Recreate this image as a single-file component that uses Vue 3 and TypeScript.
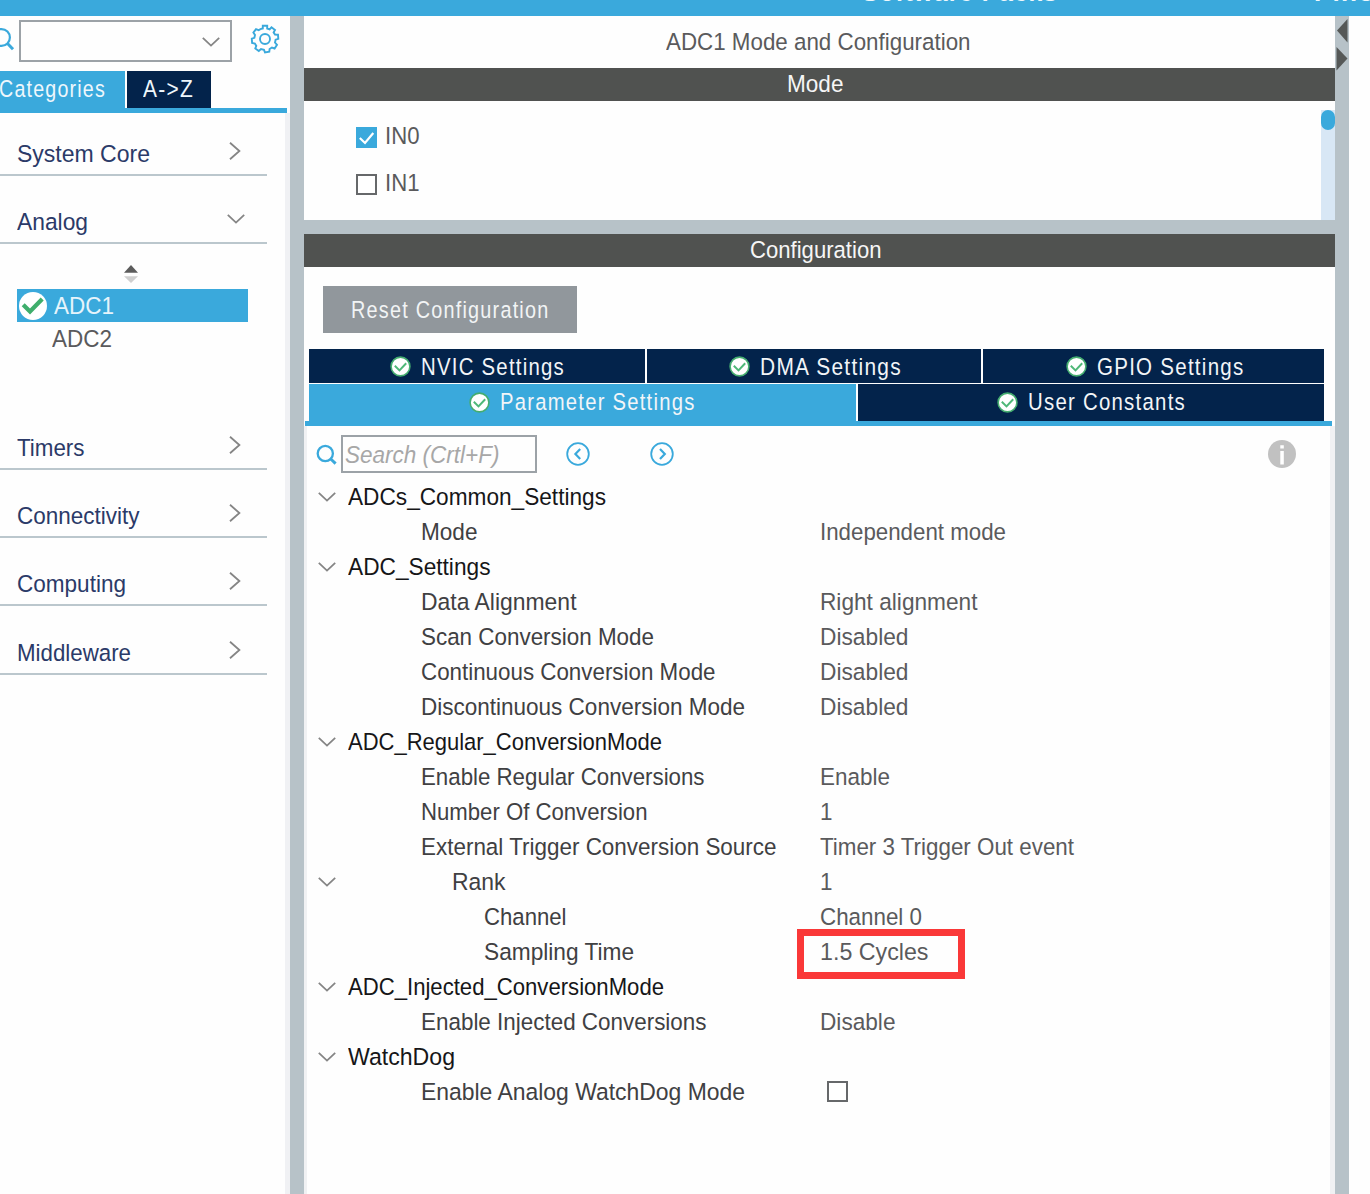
<script setup lang="ts">
import type { Directive } from 'vue'

interface Row {
  label: string
  w: number
  level: 'group' | 'item' | 'sub' | 'leaf'
  open?: boolean
  value?: string
  vw?: number
  check?: boolean
  marked?: boolean
}

interface Tab {
  label: string
  w: number
  pad: number
  width: number
  active?: boolean
}

// Condenses a label horizontally so that it takes the given width.
const vFit: Directive<HTMLElement, number> = {
  mounted(el, { value }) {
    const natural = el.getBoundingClientRect().width
    el.style.transform = `scaleX(${value / natural})`
    el.style.marginRight = `${value - natural}px`
  },
}

const before = [
  { label: 'System Core', w: 133, open: false },
  { label: 'Analog', w: 71, open: true },
]
const after = [
  { label: 'Timers', w: 67.5 },
  { label: 'Connectivity', w: 122.5 },
  { label: 'Computing', w: 109 },
  { label: 'Middleware', w: 114 },
]

const tabRows: Tab[][] = [
  [
    { label: 'NVIC Settings', w: 144, pad: 81, width: 336 },
    { label: 'DMA Settings', w: 142, pad: 82, width: 334 },
    { label: 'GPIO Settings', w: 147.5, pad: 82.5, width: 341 },
  ],
  [
    { label: 'Parameter Settings', w: 195.5, pad: 159.5, width: 546.5, active: true },
    { label: 'User Constants', w: 158, pad: 139, width: 466.5 },
  ],
]

const rows: Row[] = [
  { label: 'ADCs_Common_Settings', w: 258, level: 'group', open: true },
  { label: 'Mode', w: 56.5, level: 'item', value: 'Independent mode', vw: 186 },
  { label: 'ADC_Settings', w: 142.5, level: 'group', open: true },
  { label: 'Data Alignment', w: 155.5, level: 'item', value: 'Right alignment', vw: 157.5 },
  { label: 'Scan Conversion Mode', w: 233, level: 'item', value: 'Disabled', vw: 88.5 },
  { label: 'Continuous Conversion Mode', w: 294.5, level: 'item', value: 'Disabled', vw: 88.5 },
  { label: 'Discontinuous Conversion Mode', w: 324, level: 'item', value: 'Disabled', vw: 88.5 },
  { label: 'ADC_Regular_ConversionMode', w: 314, level: 'group', open: true },
  { label: 'Enable Regular Conversions', w: 283.5, level: 'item', value: 'Enable', vw: 70 },
  { label: 'Number Of Conversion', w: 226.5, level: 'item', value: '1', vw: 12.5 },
  { label: 'External Trigger Conversion Source', w: 355.5, level: 'item', value: 'Timer 3 Trigger Out event', vw: 254 },
  { label: 'Rank', w: 53.5, level: 'sub', open: true, value: '1', vw: 12.5 },
  { label: 'Channel', w: 82.5, level: 'leaf', value: 'Channel 0', vw: 102 },
  { label: 'Sampling Time', w: 150, level: 'leaf', value: '1.5 Cycles', vw: 108.5, marked: true },
  { label: 'ADC_Injected_ConversionMode', w: 316, level: 'group', open: true },
  { label: 'Enable Injected Conversions', w: 285.5, level: 'item', value: 'Disable', vw: 75.5 },
  { label: 'WatchDog', w: 107, level: 'group', open: true },
  { label: 'Enable Analog WatchDog Mode', w: 324, level: 'item', check: true },
]
</script>

<template>
  <div class="app">
    <header class="topbar">
      <span class="top-item packs"><span v-fit="196" class="t">Software Packs</span></span>
      <span class="top-item pinout"><span v-fit="88" class="t">Pinout</span></span>
    </header>

    <div class="body">
      <aside class="sidebar">
        <div class="finder">
          <svg class="find-icon" width="15" height="28" viewBox="0 0 15 28">
            <circle cx="1.5" cy="10.5" r="8.4" />
            <path d="M7.5 16.5L13 22.3" stroke-width="3" />
          </svg>
          <div class="combo">
            <svg width="18" height="10" viewBox="0 0 18 10" class="chev"><path d="M.8 .8L9 8.6L17.2 .8" /></svg>
          </div>
          <svg class="gear" width="30" height="30" viewBox="-15 -15 30 30">
            <path
              d="M-2.2 -10.5L-2.2 -13.3H2.2L2.2 -10.5L4.6 -9.6L6.5 -11.7L10 -9L8.6 -6.6L10 -4.5L13 -4.3L13.3 -.2L10.6 .7L10 3.6L12 5.9L9.6 9.5L6.9 8.5L4.6 10L4.3 12.8L0 13.5L-1 10.8L-4 10.1L-6.2 12L-9.7 9.5L-8.7 6.9L-10.1 4.5L-12.9 4L-13.2 -.4L-10.6 -1.2L-10 -4L-11.6 -6.4L-9 -9.8L-6.4 -8.8L-4.6 -9.9Z"
            />
            <circle r="5" />
          </svg>
        </div>
        <div class="side-tabs">
          <div class="side-tab on"><span v-fit="107" class="t">Categories</span></div>
          <div class="side-tab az"><span v-fit="51" class="t">A-&gt;Z</span></div>
        </div>
        <div class="side-rule"></div>
        <div class="side-list">
          <div v-for="c in before" :key="c.label" class="cat">
            <span v-fit="c.w" class="t">{{ c.label }}</span>
            <svg v-if="c.open" width="18" height="10" viewBox="0 0 18 10" class="chev cat-down"><path d="M.8 .8L9 8.6L17.2 .8" /></svg>
            <svg v-else width="12" height="18" viewBox="0 0 12 18" class="chev cat-right"><path d="M1 .8L10.4 9L1 17.2" /></svg>
          </div>
          <div class="devices">
            <svg class="sorter" width="16" height="20" viewBox="0 0 16 20">
              <path d="M8 1L15 8.8H1Z" fill="#5c5c5c" />
              <path d="M1 12.2H15L8 19Z" fill="#cfcfcf" />
            </svg>
            <div class="device picked">
              <svg width="28" height="28" viewBox="0 0 28 28">
                <circle cx="14" cy="14" r="14" fill="#fff" />
                <path d="M4.2 12.7L11 19.5L23.2 7" fill="none" stroke="#3fae6c" stroke-width="4.2" />
              </svg>
              <span v-fit="60" class="t">ADC1</span>
            </div>
            <div class="device plain"><span v-fit="60" class="t">ADC2</span></div>
          </div>
          <div v-for="c in after" :key="c.label" class="cat">
            <span v-fit="c.w" class="t">{{ c.label }}</span>
            <svg width="12" height="18" viewBox="0 0 12 18" class="chev cat-right"><path d="M1 .8L10.4 9L1 17.2" /></svg>
          </div>
        </div>
      </aside>

      <div class="rail left"></div>

      <main class="main">
        <div class="title"><span v-fit="304.5" class="t">ADC1 Mode and Configuration</span></div>
        <div class="bar"><span v-fit="56.5" class="t">Mode</span></div>
        <section class="mode">
          <div class="inputs">
            <label class="input-row">
              <svg width="21" height="21" viewBox="0 0 21 21">
                <path d="M0 0H21V21H0Z" fill="#3aa9dc" />
                <path d="M3.8 11L9 16L17.3 6" fill="none" stroke="#fff" stroke-width="2.2" />
              </svg>
              <span v-fit="34.5" class="t">IN0</span>
            </label>
            <label class="input-row">
              <span class="box"></span>
              <span v-fit="34.5" class="t">IN1</span>
            </label>
          </div>
          <div class="track"><div class="thumb"></div></div>
        </section>
        <div class="split"></div>
        <div class="bar conf"><span v-fit="131.5" class="t">Configuration</span></div>
        <section class="config">
          <button class="reset"><span v-fit="198.5" class="t">Reset Configuration</span></button>
          <div class="tabs">
            <div v-for="(line, i) in tabRows" :key="i" class="tab-line" :class="{ second: i === 1 }">
              <div
                v-for="tab in line"
                :key="tab.label"
                class="tab"
                :class="{ active: tab.active }"
                :style="{ width: tab.width + 'px', paddingLeft: tab.pad + 'px' }"
              >
                <svg width="21" height="21" viewBox="0 0 21 21">
                  <circle cx="10.5" cy="10.5" r="9.4" fill="#fff" stroke="#45ad70" stroke-width="1.6" />
                  <path d="M4.8 9.8L9.5 14.4L16.2 7.2" fill="none" stroke="#4fb878" stroke-width="2" />
                </svg>
                <span v-fit="tab.w" class="t">{{ tab.label }}</span>
              </div>
            </div>
          </div>
          <div class="tab-rule"></div>
          <div class="panel">
            <div class="tools">
              <svg class="search" width="22" height="22" viewBox="0 0 22 22">
                <circle cx="9.3" cy="9.5" r="7.6" />
                <path d="M14.8 15L19.6 19.6" stroke-width="3" />
              </svg>
              <div class="query"><span v-fit="154.5" class="t">Search (Crtl+F)</span></div>
              <svg class="nav prev" width="24" height="24" viewBox="0 0 24 24">
                <circle cx="12" cy="12" r="10.8" />
                <path d="M14.2 7L9.4 12L14.2 17" stroke-width="2.2" />
              </svg>
              <svg class="nav" width="24" height="24" viewBox="0 0 24 24">
                <circle cx="12" cy="12" r="10.8" />
                <path d="M10 7L14.8 12L10 17" stroke-width="2.2" />
              </svg>
              <svg class="info" width="28" height="28" viewBox="0 0 28 28">
                <circle cx="14" cy="14" r="14" fill="#c1c1c1" />
                <path d="M12.3 5.2H15.8V8.6H12.3ZM12.3 11H15.8V24.5H12.3Z" fill="#fff" />
              </svg>
            </div>
            <div class="tree">
              <div v-for="row in rows" :key="row.label" class="row" :class="row.level">
                <div class="toggle">
                  <svg v-if="row.open" width="18" height="10" viewBox="0 0 18 10" class="chev"><path d="M.8 .8L9 8.6L17.2 .8" /></svg>
                </div>
                <div class="name"><span v-fit="row.w" class="t">{{ row.label }}</span></div>
                <div class="value" :class="{ marked: row.marked }">
                  <span v-if="row.value" v-fit="row.vw ?? 0" class="t">{{ row.value }}</span>
                  <span v-if="row.check" class="box"></span>
                </div>
              </div>
            </div>
          </div>
        </section>
      </main>

      <div class="rail right">
        <svg width="13" height="56" viewBox="0 0 13 56">
          <path d="M12.5 3V26.5L2 14.5Z" fill="#555857" />
          <path d="M1.5 31V54.5L12.5 42.5Z" fill="#555857" />
        </svg>
      </div>
    </div>
  </div>
</template>

<style>
body {
  margin: 0;
  background: #fff;
  overflow: hidden;
}
</style>

<style scoped>
.app {
  width: 1370px;
  height: 1194px;
  overflow: hidden;
  background: #fefefe;
  font-family: 'Liberation Sans', Arial, sans-serif;
  font-size: 24.5px;
  color: #5a5a5c;
}
.app *,
.app *::after {
  box-sizing: border-box;
}
svg {
  display: block;
  flex: none;
}
.t {
  display: inline-block;
  flex: none;
  white-space: pre;
  transform-origin: 0 50%;
}
.topbar {
  height: 16px;
  background: #3aa9dc;
  overflow: hidden;
  display: flex;
  color: #eef8fd;
  font-weight: bold;
  letter-spacing: 1px;
}
.top-item {
  flex: none;
  height: 28px;
  line-height: 28px;
  margin-top: -21.5px;
}
.packs {
  margin-left: 862px;
  width: 452px;
}
.body {
  display: flex;
  height: 1178px;
}
.sidebar {
  width: 290px;
  flex: none;
}
.finder {
  display: flex;
  height: 55px;
  padding-top: 4px;
}
.find-icon,
.gear,
.search,
.nav {
  fill: none;
  stroke: #3aa9dc;
  stroke-width: 2;
}
.find-icon {
  margin: 7px 4px 0 0;
  stroke-width: 2.2;
}
.combo {
  width: 213px;
  height: 42px;
  border: 2px solid #9ca2a7;
  display: flex;
  align-items: center;
  justify-content: flex-end;
  padding: 1px 10px 0 0;
}
.gear {
  margin: 4px 0 0 18px;
  stroke-width: 1.9;
}
.chev {
  fill: none;
  stroke: #858585;
  stroke-width: 1.8;
}
.side-tabs {
  display: flex;
  gap: 2px;
  height: 36.5px;
  color: #eef7fc;
  letter-spacing: 1.5px;
}
.side-tab {
  line-height: 36px;
  height: 37px;
}
.side-tab.on {
  width: 125px;
  background: #3aa9dc;
}
.side-tab.on .t {
  margin-left: -1px;
}
.side-tab.az {
  width: 84px;
  padding-left: 15.5px;
  background: #03234b;
}
.side-rule {
  height: 5px;
  width: 287px;
  background: #3aa9dc;
}
.side-list {
  height: 1082px;
  border-right: 5px solid #f0f1f4;
}
.cat {
  width: 267px;
  height: 68.2px;
  border-bottom: 2px solid #bbc7cd;
  display: flex;
  align-items: flex-end;
  padding-left: 16.5px;
  color: #2b3a68;
}
.cat:first-child {
  height: 63.5px;
}
.cat .t {
  line-height: 28px;
  margin-bottom: 6px;
}
.chev.cat-right {
  margin: 0 26px 14px auto;
}
.chev.cat-down {
  margin: 0 22.5px 18.5px auto;
}
.devices {
  height: 157.6px;
  padding: 20px 0 0 17px;
}
.sorter {
  margin: 0 0 5px 106px;
}
.device {
  height: 33px;
  line-height: 33px;
  display: flex;
  align-items: center;
}
.picked {
  width: 231px;
  padding-left: 1.5px;
  gap: 7px;
  background: #3aa9dc;
  color: #e6f4fb;
}
.plain {
  padding-left: 35px;
}
.rail {
  flex: none;
  background: #b7c2c8;
}
.rail.left {
  width: 14px;
}
.rail.right {
  width: 13.5px;
}
.main {
  width: 1031px;
  flex: none;
}
.title {
  height: 51.5px;
  line-height: 51px;
  padding-left: 362px;
}
.bar {
  height: 33px;
  line-height: 32px;
  padding-left: 482.5px;
  background: #505250;
  color: #f6f6f6;
}
.bar.conf {
  padding-left: 446px;
}
.mode {
  height: 119px;
  display: flex;
  justify-content: space-between;
}
.inputs {
  padding: 13.5px 0 0 52px;
}
.input-row {
  display: flex;
  align-items: center;
  gap: 8px;
  height: 47px;
}
.input-row .t {
  margin-top: -3px;
}
.box {
  display: block;
  width: 21px;
  height: 21px;
  border: 2px solid #66686a;
  background: #fff;
}
.track {
  width: 14px;
  height: 110px;
  margin-top: 9px;
  background: #d8e7f5;
}
.thumb {
  height: 20px;
  border-radius: 7px;
  background: #3aa9dc;
}
.split {
  height: 14px;
  background: #b7c2c8;
}
.config {
  padding-top: 19.5px;
}
.reset {
  display: block;
  width: 254px;
  height: 47px;
  margin: 0 0 16px 19px;
  padding: 0 0 0 28px;
  border: 0;
  background: #91979c;
  color: #f2f4f5;
  font: inherit;
  letter-spacing: 1.5px;
  text-align: left;
}
.tabs {
  padding-left: 5px;
  color: #f2f5f8;
  letter-spacing: 1.5px;
}
.tab-line {
  display: flex;
  gap: 2px;
  height: 33.5px;
  margin-bottom: 1.5px;
}
.tab-line.second {
  height: 37px;
  margin: 0;
}
.tab {
  display: flex;
  align-items: center;
  gap: 10px;
  padding-top: 2px;
  background: #03234b;
}
.second .tab {
  padding-top: 0;
  padding-bottom: 1px;
}
.tab.active {
  background: #3aa9dc;
}
.tab-rule {
  width: 1027px;
  height: 5px;
  margin-left: 1px;
  background: #3aa9dc;
}
.panel {
  height: 768px;
  border-left: 3px solid #f0f1f3;
  border-right: 5px solid #f0f1f3;
}
.tools {
  height: 53px;
  display: flex;
  padding: 9px 0 0 9px;
}
.search {
  margin: 9px 3px 0 0;
  stroke-width: 2.3;
}
.query {
  width: 196px;
  height: 38px;
  border: 2px solid #9ca2a7;
  padding-left: 2px;
  line-height: 35px;
  font-style: italic;
  color: #a7a7a7;
}
.nav {
  margin: 7px 60px 0 0;
  stroke-width: 1.8;
}
.nav.prev {
  margin-left: 29px;
}
.info {
  margin: 5px 0 0 533.5px;
}
.row {
  height: 35px;
  display: flex;
  line-height: 35px;
}
.toggle {
  width: 40.5px;
  padding: 13px 0 0 10.5px;
}
.name {
  width: 472px;
  color: #404042;
}
.group .name {
  color: #161618;
}
.item .name {
  padding-left: 73px;
}
.sub .name {
  padding-left: 104.5px;
}
.leaf .name {
  padding-left: 136.5px;
}
.value {
  position: relative;
}
.value .box {
  margin: 7px 0 0 7.5px;
}
.marked::after {
  content: '';
  position: absolute;
  left: -22.5px;
  top: -5px;
  width: 168px;
  height: 50px;
  border: 7px solid #fa3838;
}
</style>
